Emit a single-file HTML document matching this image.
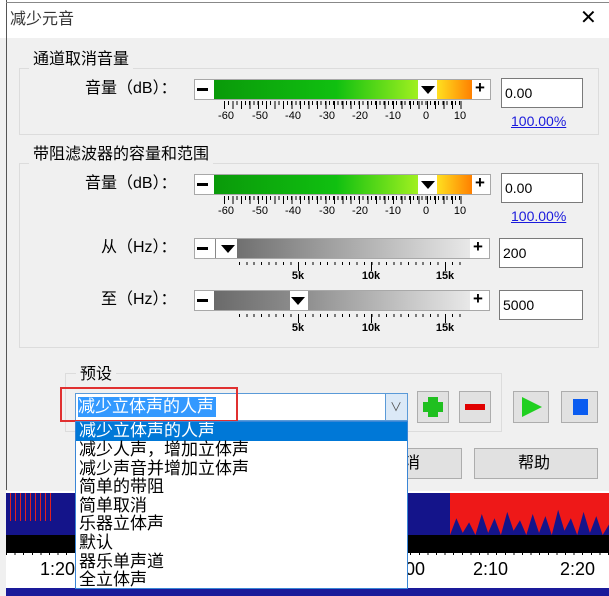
<!DOCTYPE html>
<html><head><meta charset="utf-8"><style>
*{margin:0;padding:0;box-sizing:border-box}
body{width:609px;height:596px;overflow:hidden;background:#f0f0f0;position:relative;font-family:"Liberation Sans","Noto Sans CJK SC",sans-serif;color:#000}
.a{position:absolute}
.t{position:absolute;white-space:nowrap;font-size:16px;line-height:18px}
.grp{position:absolute;border:1px solid #dcdcdc}
.lbl{position:absolute;background:#f0f0f0;padding:0 4px;font-size:16px;line-height:18px;white-space:nowrap}
.inp{position:absolute;background:#fff;border:1px solid #7a7a7a;font-size:14px;line-height:28px;padding-left:3px}
.sl{position:absolute;background:#fff;border:1px solid #a8a8a8}
.btn{position:absolute;background:#e1e1e1;border:1px solid #adadad}
.tk{position:absolute;font-size:11px;color:#000;white-space:nowrap;transform:translateX(-50%)}
</style></head><body>
<div class="a" style="left:0;top:0;width:609px;height:38px;background:#fff"></div>
<div class="a" style="left:6px;top:0;width:1px;height:490px;background:#555"></div>
<div class="a" style="left:6px;top:2px;width:603px;height:1px;background:#888"></div>
<div class="t" style="left:10px;top:11px;color:#333">减少元音</div>
<div class="t" style="left:580px;top:9px;font-size:20px">✕</div>

<div class="grp" style="left:19px;top:68px;width:580px;height:67px"></div>
<div class="lbl" style="left:29px;top:51px">通道取消音量</div>
<div class="t" style="left:85px;top:80px">音量（dB）：</div>

<div class="grp" style="left:19px;top:163px;width:580px;height:185px"></div>
<div class="lbl" style="left:29px;top:146px">带阻滤波器的容量和范围</div>
<div class="t" style="left:85px;top:175px">音量（dB）：</div>
<div class="t" style="left:101px;top:239px">从（Hz）：</div>
<div class="t" style="left:101px;top:291px">至（Hz）：</div>

<div class="sl" style="left:194px;top:79px;width:297px;height:21px"></div>
<div class="a" style="left:197px;top:88px;width:11px;height:3px;background:#000"></div>
<div class="a" style="left:214px;top:80px;width:204px;height:19px;background:linear-gradient(90deg,#0a9a0a,#10c010 60%,#a0f020)"></div>
<div class="a" style="left:421px;top:86px;border-left:7px solid transparent;border-right:7px solid transparent;border-top:8px solid #000"></div>
<div class="a" style="left:437px;top:80px;width:35px;height:19px;background:linear-gradient(90deg,#ffe020,#ff8000)"></div>
<div class="t" style="left:475px;top:79px;font-size:17px;font-weight:bold">+</div>
<div class="a" style="left:224px;top:101px;width:238px;height:8px;background:repeating-linear-gradient(90deg,#000 0 1px,transparent 1px 4.2px);clip-path:inset(0 0 4px 0)"></div>
<div class="a" style="left:224px;top:101px;width:238px;height:8px;background:repeating-linear-gradient(90deg,#000 0 1px,transparent 1px 8.45px)"></div>
<div class="tk" style="left:226px;top:110px">-60</div><div class="tk" style="left:260px;top:110px">-50</div><div class="tk" style="left:293px;top:110px">-40</div><div class="tk" style="left:327px;top:110px">-30</div><div class="tk" style="left:360px;top:110px">-20</div><div class="tk" style="left:393px;top:110px">-10</div><div class="tk" style="left:426px;top:110px">0</div><div class="tk" style="left:460px;top:110px">10</div>
<div class="inp" style="left:501px;top:78px;width:82px;height:30px">0.00</div>
<div class="t" style="left:511px;top:112px;font-size:14px;color:#1a1adc;text-decoration:underline">100.00%</div>

<div class="sl" style="left:194px;top:174px;width:297px;height:21px"></div>
<div class="a" style="left:197px;top:183px;width:11px;height:3px;background:#000"></div>
<div class="a" style="left:214px;top:175px;width:204px;height:19px;background:linear-gradient(90deg,#0a9a0a,#10c010 60%,#a0f020)"></div>
<div class="a" style="left:421px;top:181px;border-left:7px solid transparent;border-right:7px solid transparent;border-top:8px solid #000"></div>
<div class="a" style="left:437px;top:175px;width:35px;height:19px;background:linear-gradient(90deg,#ffe020,#ff8000)"></div>
<div class="t" style="left:475px;top:174px;font-size:17px;font-weight:bold">+</div>
<div class="a" style="left:224px;top:196px;width:238px;height:8px;background:repeating-linear-gradient(90deg,#000 0 1px,transparent 1px 4.2px);clip-path:inset(0 0 4px 0)"></div>
<div class="a" style="left:224px;top:196px;width:238px;height:8px;background:repeating-linear-gradient(90deg,#000 0 1px,transparent 1px 8.45px)"></div>
<div class="tk" style="left:226px;top:205px">-60</div><div class="tk" style="left:260px;top:205px">-50</div><div class="tk" style="left:293px;top:205px">-40</div><div class="tk" style="left:327px;top:205px">-30</div><div class="tk" style="left:360px;top:205px">-20</div><div class="tk" style="left:393px;top:205px">-10</div><div class="tk" style="left:426px;top:205px">0</div><div class="tk" style="left:460px;top:205px">10</div>
<div class="inp" style="left:501px;top:173px;width:82px;height:30px">0.00</div>
<div class="t" style="left:511px;top:207px;font-size:14px;color:#1a1adc;text-decoration:underline">100.00%</div>

<div class="sl" style="left:194px;top:238px;width:296px;height:21px"></div>
<div class="a" style="left:197px;top:247px;width:11px;height:3px;background:#000"></div>
<div class="a" style="left:215px;top:239px;width:1px;height:19px;background:#888"></div>
<div class="a" style="left:221px;top:245px;border-left:7px solid transparent;border-right:7px solid transparent;border-top:8px solid #000"></div>
<div class="a" style="left:237px;top:239px;width:233px;height:19px;background:linear-gradient(90deg,#707070,#e8e8e8)"></div>
<div class="t" style="left:473px;top:238px;font-size:17px;font-weight:bold">+</div>
<div class="a" style="left:239px;top:262px;width:222px;height:3px;background:repeating-linear-gradient(90deg,#000 0 1px,transparent 1px 7.35px)"></div>
<div class="a" style="left:298px;top:262px;width:1px;height:9px;background:#000"></div>
<div class="a" style="left:371px;top:262px;width:1px;height:9px;background:#000"></div>
<div class="a" style="left:445px;top:262px;width:1px;height:9px;background:#000"></div>
<div class="tk" style="left:298px;top:270px;font-weight:bold">5k</div><div class="tk" style="left:371px;top:270px;font-weight:bold">10k</div><div class="tk" style="left:445px;top:270px;font-weight:bold">15k</div>
<div class="inp" style="left:499px;top:238px;width:84px;height:30px">200</div>

<div class="sl" style="left:194px;top:290px;width:296px;height:21px"></div>
<div class="a" style="left:197px;top:299px;width:11px;height:3px;background:#000"></div>
<div class="a" style="left:214px;top:291px;width:76px;height:19px;background:linear-gradient(90deg,#6a6a6a,#8a8a8a)"></div>
<div class="a" style="left:290px;top:291px;width:18px;height:19px;background:#fff"></div>
<div class="a" style="left:291px;top:297px;border-left:7px solid transparent;border-right:7px solid transparent;border-top:8px solid #000"></div>
<div class="a" style="left:308px;top:291px;width:162px;height:19px;background:linear-gradient(90deg,#909090,#e8e8e8)"></div>
<div class="t" style="left:473px;top:290px;font-size:17px;font-weight:bold">+</div>
<div class="a" style="left:239px;top:314px;width:222px;height:3px;background:repeating-linear-gradient(90deg,#000 0 1px,transparent 1px 7.35px)"></div>
<div class="a" style="left:298px;top:314px;width:1px;height:9px;background:#000"></div>
<div class="a" style="left:371px;top:314px;width:1px;height:9px;background:#000"></div>
<div class="a" style="left:445px;top:314px;width:1px;height:9px;background:#000"></div>
<div class="tk" style="left:298px;top:322px;font-weight:bold">5k</div><div class="tk" style="left:371px;top:322px;font-weight:bold">10k</div><div class="tk" style="left:445px;top:322px;font-weight:bold">15k</div>
<div class="inp" style="left:499px;top:290px;width:84px;height:30px">5000</div>

<div class="grp" style="left:65px;top:373px;width:437px;height:59px"></div>
<div class="lbl" style="left:76px;top:366px">预设</div>
<div class="a" style="left:75px;top:393px;width:333px;height:28px;background:#fff;border:1px solid #5a9ad8"></div>
<div class="a" style="left:385px;top:394px;width:22px;height:26px;background:#dbe9f7;border-left:1px solid #5a9ad8"></div>
<div class="t" style="left:390px;top:398px;color:#555;font-size:12px">∨</div>
<div class="a" style="left:78px;top:397px;width:138px;height:20px;background:#3399ff"></div>
<div class="t" style="left:78px;top:398px;font-size:17px;color:#fff">减少立体声的人声</div>
<div class="a" style="left:60px;top:387px;width:178px;height:35px;border:2px solid #e03030"></div>

<div class="btn" style="left:417px;top:391px;width:32px;height:32px"></div>
<div class="a" style="left:428px;top:397px;width:10px;height:20px;background:#20c020"></div>
<div class="a" style="left:423px;top:402px;width:20px;height:10px;background:#20c020"></div>
<div class="btn" style="left:459px;top:391px;width:32px;height:32px"></div>
<div class="a" style="left:465px;top:404px;width:20px;height:6px;background:#e00000"></div>
<div class="btn" style="left:513px;top:391px;width:36px;height:32px"></div>
<div class="a" style="left:522px;top:397px;border-top:10px solid transparent;border-bottom:10px solid transparent;border-left:20px solid #20d020"></div>
<div class="btn" style="left:561px;top:391px;width:37px;height:32px"></div>
<div class="a" style="left:573px;top:399px;width:15px;height:16px;background:#0a5cf0"></div>

<div class="btn" style="left:395px;top:448px;width:67px;height:31px"></div>
<div class="t" style="left:404px;top:455px">消</div>
<div class="btn" style="left:474px;top:448px;width:124px;height:31px"></div>
<div class="t" style="left:518px;top:455px">帮助</div>

<div class="a" style="left:6px;top:491px;width:603px;height:105px;background:#fff"></div>
<div class="a" style="left:6px;top:493px;width:603px;height:42px;background:#14148a"></div>
<div class="a" style="left:450px;top:493px;width:159px;height:42px;background:#ee1818;clip-path:polygon(0 0,100% 0,100% 75%,96% 100%,92% 55%,88% 95%,84% 45%,80% 100%,76% 60%,72% 90%,68% 40%,64% 100%,60% 55%,56% 95%,52% 50%,48% 100%,44% 65%,40% 90%,36% 45%,32% 100%,28% 60%,24% 95%,20% 50%,16% 100%,12% 70%,8% 95%,4% 60%,0 100%)"></div>
<div class="a" style="left:10px;top:493px;width:45px;height:28px;background:repeating-linear-gradient(90deg,#e02020 0 1px,transparent 1px 5px)"></div>
<div class="a" style="left:6px;top:535px;width:603px;height:18px;background:#000"></div>
<div class="a" style="left:6px;top:551px;width:603px;height:4px;background:repeating-linear-gradient(90deg,#000 0 1px,transparent 1px 8.6px)"></div>
<div class="t" style="left:40px;top:560px;font-size:18px">1:20</div>
<div class="t" style="left:405px;top:560px;font-size:18px">00</div>
<div class="t" style="left:473px;top:560px;font-size:18px">2:10</div>
<div class="t" style="left:560px;top:560px;font-size:18px">2:20</div>
<div class="a" style="left:6px;top:588px;width:603px;height:8px;background:#1a1a9a"></div>

<div class="a" style="left:75px;top:421px;width:333px;height:168px;background:#fff;border:1px solid #3a86d6;font-size:17px;line-height:18.6px;padding-left:3px;overflow:hidden">
<div style="background:#0078d7;color:#fff;margin-left:-3px;padding-left:3px;height:19px">减少立体声的人声</div>
<div>减少人声，增加立体声</div>
<div>减少声音并增加立体声</div>
<div>简单的带阻</div>
<div>简单取消</div>
<div>乐器立体声</div>
<div>默认</div>
<div>器乐单声道</div>
<div>全立体声</div>
</div>
</body></html>
